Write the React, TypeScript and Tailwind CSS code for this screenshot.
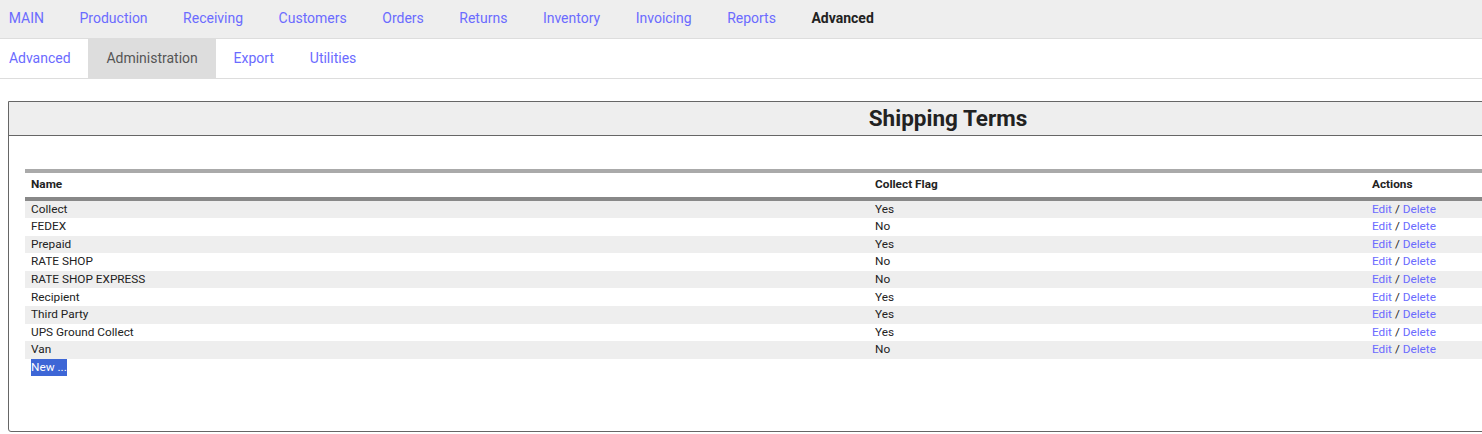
import React from 'react';

const mainNav = ['MAIN', 'Production', 'Receiving', 'Customers', 'Orders', 'Returns', 'Inventory', 'Invoicing', 'Reports', 'Advanced'];
const subNav = ['Advanced', 'Administration', 'Export', 'Utilities'];

const terms = [
  { name: 'Collect', collect: 'Yes' },
  { name: 'FEDEX', collect: 'No' },
  { name: 'Prepaid', collect: 'Yes' },
  { name: 'RATE SHOP', collect: 'No' },
  { name: 'RATE SHOP EXPRESS', collect: 'No' },
  { name: 'Recipient', collect: 'Yes' },
  { name: 'Third Party', collect: 'Yes' },
  { name: 'UPS Ground Collect', collect: 'Yes' },
  { name: 'Van', collect: 'No' },
];

export default function App() {
  return (
    <div className="w-full min-h-screen overflow-hidden bg-white font-['Roboto',sans-serif] text-[#222]">
      {/* top menu */}
      <div className="h-[39px] bg-[#eeeeee] border-b border-[#dddddd] overflow-hidden">
        <ul className="flex h-full ml-[-9px] pb-[2px]">
          {mainNav.map((item) => (
            <li
              key={item}
              className={`flex items-center px-[17.75px] text-[14px] ${
                item === 'Advanced' ? 'font-bold text-[#222]' : 'text-[#6b6bff]'
              }`}
            >
              {item}
            </li>
          ))}
        </ul>
      </div>

      {/* sub menu */}
      <div className="h-[40px] border-b border-[#dddddd] overflow-hidden">
        <ul className="flex h-full ml-[-9px]">
          {subNav.map((item) => (
            <li
              key={item}
              className={`flex items-center px-[17.9px] text-[14px] ${
                item === 'Administration' ? 'bg-[#dddddd] text-[#555]' : 'text-[#6b6bff]'
              }`}
            >
              {item}
            </li>
          ))}
        </ul>
      </div>

      {/* panel */}
      <div className="ml-[8px] mt-[22px] w-[1880px] h-[331px] border border-[#666] rounded-bl-[3px]">
        <div className="h-[34px] bg-[#eeeeee] border-b border-[#666] flex items-center justify-center">
          <h2 className="text-[22.5px] font-bold text-[#222] leading-none">Shipping Terms</h2>
        </div>

        <div className="mx-[16px] mt-[33px]">
          <table className="w-full border-collapse text-[11.8px]">
            <colgroup>
              <col className="w-[844px]" />
              <col className="w-[497px]" />
              <col />
            </colgroup>
            <thead>
              <tr className="border-t-4 border-t-[#aaaaaa] border-b-4 border-b-[#888888]">
                <th className="h-[28px] px-[6px] text-left font-bold">Name</th>
                <th className="h-[28px] px-[6px] text-left font-bold">Collect Flag</th>
                <th className="h-[28px] px-[6px] text-left font-bold">Actions</th>
              </tr>
            </thead>
            <tbody>
              {terms.map((t, i) => (
                <tr key={t.name} className={i % 2 === 0 ? 'bg-[#eeeeee]' : 'bg-white'}>
                  <td className="h-[17.6px] px-[6px] leading-[17px]">{t.name}</td>
                  <td className="h-[17.6px] px-[6px] leading-[17px]">{t.collect}</td>
                  <td className="h-[17.6px] px-[6px] leading-[17px]">
                    <a className="text-[#6b6bff]">Edit</a> / <a className="text-[#6b6bff]">Delete</a>
                  </td>
                </tr>
              ))}
            </tbody>
          </table>
          <button className="block ml-[6px] h-[17px] bg-[#3d66d6] text-white text-[11.8px] leading-[17px]">
            New ...
          </button>
        </div>
      </div>
    </div>
  );
}
